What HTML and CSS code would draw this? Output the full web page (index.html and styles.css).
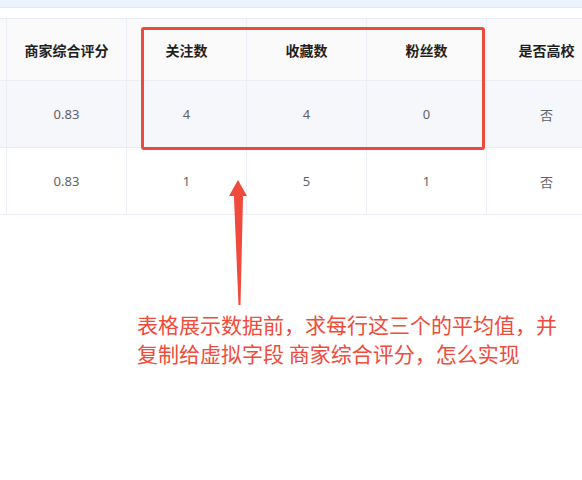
FILE: index.html
```html
<!DOCTYPE html>
<html lang="zh-CN">
<head>
  <meta charset="UTF-8">
  <title>商家评分表格</title>
  <link rel="stylesheet" href="styles.css">
</head>
<body>
  <div class="topbar"></div>

  <div class="table-wrap">
    <table class="data-table">
      <thead>
        <tr>
          <th></th>
          <th>商家综合评分</th>
          <th>关注数</th>
          <th>收藏数</th>
          <th>粉丝数</th>
          <th>是否高校</th>
        </tr>
      </thead>
      <tbody>
        <tr class="hover">
          <td></td>
          <td>0.83</td>
          <td>4</td>
          <td>4</td>
          <td>0</td>
          <td>否</td>
        </tr>
        <tr>
          <td></td>
          <td>0.83</td>
          <td>1</td>
          <td>5</td>
          <td>1</td>
          <td>否</td>
        </tr>
      </tbody>
    </table>
  </div>

  <!-- annotation layer -->
  <div class="mark-box"></div>
  <svg class="mark-arrow" width="30" height="140" viewBox="0 0 30 140">
    <polygon points="15,0 24,16 20,16 20,18 17.5,125 15.5,125 11,18 11,16 6,16" fill="#ef4a3c"/>
  </svg>
  <p class="mark-note">表格展示数据前，求每行这三个的平均值，并<br>复制给虚拟字段 商家综合评分，怎么实现</p>
</body>
</html>
```

FILE: styles.css
```css
body {
  margin: 0;
  background: #fff;
  font-family: "Noto Sans", "Noto Sans CJK SC", sans-serif;
  position: relative;
  height: 480px;
  overflow: hidden;
}
.topbar {
  height: 7px;
  background-color: #ebf3fe;
  border-bottom: 1px solid #dfe8f6;
}
.table-wrap {
  margin-top: 10px;
  overflow: hidden;
}
.data-table {
  margin-left: -114px;
  border-collapse: collapse;
  table-layout: fixed;
  width: 721px;
}
.data-table th, .data-table td {
  width: 119px;
  border: 1px solid #ebeef5;
  text-align: center;
  padding: 0;
}
.data-table th {
  height: 61px;
  background-color: #fafafa;
  color: #1f1f1f;
  font-size: 14px;
  font-weight: bold;
}
.data-table td {
  height: 66px;
  color: #606266;
  font-size: 13px;
}
.data-table tr.hover td {
  background-color: #f5f7fa;
}
.mark-box {
  position: absolute;
  left: 141px;
  top: 27px;
  width: 338px;
  height: 117px;
  border: 3px solid #ec4a3c;
  border-radius: 3px;
}
.mark-arrow {
  position: absolute;
  left: 223px;
  top: 180px;
}
.mark-note {
  position: absolute;
  left: 137px;
  top: 310px;
  margin: 0;
  color: #f04b3b;
  font-family: "Noto Sans CJK SC", sans-serif;
  font-size: 21px;
  line-height: 29px;
}
```
